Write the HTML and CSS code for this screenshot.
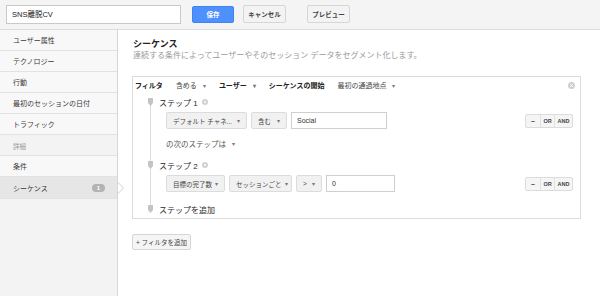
FILE: index.html
```html
<!DOCTYPE html>
<html lang="ja">
<head>
<meta charset="utf-8">
<link rel="stylesheet" href="styles.css">
</head>
<body>
<div class="topbar">
  <div class="name-input">SNS離脱CV</div>
  <button class="btn btn-save">保存</button>
  <button class="btn btn-cancel">キャンセル</button>
  <button class="btn btn-preview">プレビュー</button>
</div>
<div class="layout">
  <nav class="sidebar">
    <div class="nav-item">ユーザー属性</div>
    <div class="nav-item">テクノロジー</div>
    <div class="nav-item">行動</div>
    <div class="nav-item">最初のセッションの日付</div>
    <div class="nav-item">トラフィック</div>
    <div class="nav-label">詳細</div>
    <div class="nav-item">条件</div>
    <div class="nav-item selected">シーケンス<span class="badge">1</span></div>
  </nav>
  <main class="main">
    <h1 class="title">シーケンス</h1>
    <p class="subtitle">連続する条件によってユーザーやそのセッション データをセグメント化します。</p>
    <div class="filter-box">
      <div class="filter-head">
        <span class="fh bold">フィルタ</span>
        <span class="fh">含める<i class="caret">▾</i></span>
        <span class="fh bold">ユーザー<i class="caret">▾</i></span>
        <span class="fh bold">シーケンスの開始</span>
        <span class="fh">最初の通過地点<i class="caret">▾</i></span>
        <span class="close head-close"><svg viewBox="0 0 8 8" width="7" height="7"><circle cx="4" cy="4" r="4" fill="#d0d0d0"/><path d="M2.5 2.5l3 3M5.5 2.5l-3 3" stroke="#fff" stroke-width="1"/></svg></span>
      </div>
      <div class="steps">
        <div class="step-head">
          <svg class="pin" viewBox="0 0 5 8" width="5" height="8"><path d="M0.5 0h4a0.5 0.5 0 0 1 0.5 0.5v4.5l-2.5 3l-2.5-3v-4.5a0.5 0.5 0 0 1 0.5-0.5z" fill="#c4c4c4"/></svg>
          <span class="step-label">ステップ 1</span>
          <svg class="step-close" viewBox="0 0 8 8" width="6" height="6"><circle cx="4" cy="4" r="4" fill="#d0d0d0"/><path d="M2.5 2.5l3 3M5.5 2.5l-3 3" stroke="#fff" stroke-width="1"/></svg>
        </div>
        <div class="cond-row">
          <div class="sel w-81">デフォルト チャネ...<i class="caret">▾</i></div>
          <div class="sel w-36">含む<i class="caret">▾</i></div>
          <div class="txt w-96">Social</div>
          <div class="ops"><span class="op">–</span><span class="op">OR</span><span class="op">AND</span></div>
        </div>
        <div class="next-step">の次のステップは<i class="caret">▾</i></div>
        <div class="step-head step2">
          <svg class="pin" viewBox="0 0 5 8" width="5" height="8"><path d="M0.5 0h4a0.5 0.5 0 0 1 0.5 0.5v4.5l-2.5 3l-2.5-3v-4.5a0.5 0.5 0 0 1 0.5-0.5z" fill="#c4c4c4"/></svg>
          <span class="step-label">ステップ 2</span>
          <svg class="step-close" viewBox="0 0 8 8" width="6" height="6"><circle cx="4" cy="4" r="4" fill="#d0d0d0"/><path d="M2.5 2.5l3 3M5.5 2.5l-3 3" stroke="#fff" stroke-width="1"/></svg>
        </div>
        <div class="cond-row">
          <div class="sel w-59">目標の完了数<i class="caret">▾</i></div>
          <div class="sel w-63">セッションごと<i class="caret">▾</i></div>
          <div class="sel w-26">&gt;<i class="caret">▾</i></div>
          <div class="txt w-69">0</div>
          <div class="ops"><span class="op">–</span><span class="op">OR</span><span class="op">AND</span></div>
        </div>
        <div class="step-head add-step">
          <svg class="pin" viewBox="0 0 5 8" width="5" height="8"><path d="M0.5 0h4a0.5 0.5 0 0 1 0.5 0.5v4.5l-2.5 3l-2.5-3v-4.5a0.5 0.5 0 0 1 0.5-0.5z" fill="#c4c4c4"/></svg>
          <span class="step-label">ステップを追加</span>
        </div>
      </div>
    </div>
    <button class="add-filter">+ フィルタを追加</button>
  </main>
</div>
</body>
</html>
```
FILE: styles.css
```css
* { box-sizing: border-box; }
html, body { margin: 0; padding: 0; }
body {
  width: 600px;
  height: 296px;
  overflow: hidden;
  font-family: "Liberation Sans", "Noto Sans CJK JP", sans-serif;
  font-size: 7px;
  color: #333;
  background: #fff;
}
.topbar {
  height: 30px;
  background: #f4f4f4;
  border-bottom: 1px solid #dcdcdc;
  display: flex;
  align-items: center;
  padding-left: 6px;
  padding-bottom: 1px;
}
.name-input {
  width: 175px;
  height: 19px;
  background: #fff;
  border: 1px solid #c9c9c9;
  padding-left: 5px;
  font-size: 7.5px;
  line-height: 17px;
  color: #222;
}
.btn {
  font-family: "Liberation Sans", "Noto Sans CJK JP", sans-serif;
  font-size: 6.5px;
  font-weight: bold;
  border-radius: 2px;
  padding: 0;
  height: 18px;
}
.btn-save {
  margin-left: 11px;
  width: 42px;
  height: 17px;
  background: #4d90fe;
  border: 1px solid #3f84f0;
  color: #fff;
}
.btn-cancel {
  margin-left: 9px;
  width: 43px;
  background: #f3f3f3;
  border: 1px solid #d6d6d6;
  color: #444;
}
.btn-preview {
  margin-left: 21px;
  width: 43px;
  background: #f3f3f3;
  border: 1px solid #d6d6d6;
  color: #444;
}
.layout {
  display: flex;
  height: 266px;
}
.sidebar {
  width: 118px;
  background: #f3f3f3;
  border-right: 1px solid #d6d6d6;
  flex: none;
}
.nav-item {
  position: relative;
  height: 21px;
  display: flex;
  align-items: center;
  padding-left: 13px;
  background: #f8f8f8;
  border-bottom: 1px solid #e2e2e2;
  color: #3a3a3a;
  font-size: 7px;
}
.nav-label {
  height: 21px;
  display: flex;
  align-items: flex-end;
  padding: 0 0 4px 13px;
  font-size: 6.5px;
  color: #999;
  border-bottom: 1px solid #e2e2e2;
}
.nav-item.selected {
  background: #e6e6e6;
  height: 22px;
}
.badge {
  margin-left: auto;
  margin-right: 12px;
  width: 13px;
  height: 8px;
  border-radius: 4px;
  background: #b3b3b3;
  color: #fff;
  font-size: 6px;
  font-weight: bold;
  display: flex;
  align-items: center;
  justify-content: center;
}
.nav-item.selected::after {
  content: "";
  position: absolute;
  right: -7px;
  top: 5px;
  border-style: solid;
  border-width: 6px 0 6px 6px;
  border-color: transparent transparent transparent #cfcfcf;
}
.nav-item.selected::before {
  content: "";
  position: absolute;
  right: -6px;
  top: 6px;
  z-index: 1;
  border-style: solid;
  border-width: 5px 0 5px 5px;
  border-color: transparent transparent transparent #fff;
}
.main {
  flex: 1;
  padding: 9px 0 0 14px;
}
.title {
  margin: 0;
  padding-left: 1px;
  font-size: 9px;
  font-weight: bold;
  line-height: 11px;
  color: #222;
}
.subtitle {
  margin: 0;
  padding-left: 1px;
  font-size: 8px;
  line-height: 11px;
  color: #9a9a9a;
}
.filter-box {
  margin-top: 15px;
  width: 449px;
  border: 1px solid #dcdcdc;
  padding: 3px 7px 3px 2px;
}
.filter-head {
  display: flex;
  align-items: center;
  height: 10px;
  gap: 13px;
  font-size: 7px;
}
.fh { display: flex; align-items: center; color: #444; }
.fh.bold { font-weight: bold; color: #222; }
.caret {
  font-style: normal;
  color: #777;
  font-size: 6px;
  margin-left: 6px;
}
.head-close { margin-left: auto; display: flex; margin-right: -2px; }
.steps {
  position: relative;
  margin-left: 13px;
  margin-top: 6px;
}
.steps::before {
  content: "";
  position: absolute;
  left: 2px;
  top: 6px;
  bottom: 6px;
  width: 1px;
  background: #dcdcdc;
}
.step-head {
  position: relative;
  display: flex;
  align-items: center;
  height: 12px;
  font-size: 8px;
  color: #2a2a2a;
}
.pin { flex: none; }
.step-label { margin-left: 6px; }
.step-close { margin-left: 4px; }
.step2 { margin-top: 10px; }
.add-step { margin-top: 11px; }
.cond-row {
  display: flex;
  align-items: center;
  gap: 4px;
  margin: 4px 0 0 18px;
  height: 17px;
}
.sel {
  height: 17px;
  display: flex;
  align-items: center;
  justify-content: space-between;
  padding: 0 6px;
  background: #f1f1f1;
  border: 1px solid #dcdcdc;
  border-radius: 2px;
  font-size: 6.5px;
  color: #444;
  white-space: nowrap;
}
.sel .caret { margin-left: 3px; }
.txt {
  height: 17px;
  display: flex;
  align-items: center;
  padding-left: 5px;
  background: #fff;
  border: 1px solid #cfcfcf;
  font-size: 7px;
  color: #333;
}
.w-81 { width: 81px; }
.w-36 { width: 36px; }
.w-96 { width: 96px; }
.w-59 { width: 59px; }
.w-63 { width: 63px; }
.w-26 { width: 26px; }
.w-69 { width: 69px; }
.ops {
  margin-left: auto;
  display: flex;
  height: 14px;
  border: 1px solid #dcdcdc;
  border-radius: 2px;
  background: #f5f5f5;
}
.op {
  display: flex;
  align-items: center;
  justify-content: center;
  font-size: 5.5px;
  font-weight: bold;
  color: #444;
  width: 14px;
  border-left: 1px solid #e2e2e2;
}
.op:first-child { border-left: 0; font-size: 7px; }
.op:last-child { width: 18px; }
.next-step {
  display: flex;
  align-items: center;
  margin: 8px 0 0 18px;
  height: 12px;
  font-size: 7.5px;
  color: #555;
}
.add-filter {
  margin-top: 15px;
  width: 59px;
  height: 16px;
  padding: 0;
  font-family: "Liberation Sans", "Noto Sans CJK JP", sans-serif;
  font-size: 6.5px;
  color: #444;
  background: #f5f5f5;
  border: 1px solid #d6d6d6;
  border-radius: 2px;
}
```
